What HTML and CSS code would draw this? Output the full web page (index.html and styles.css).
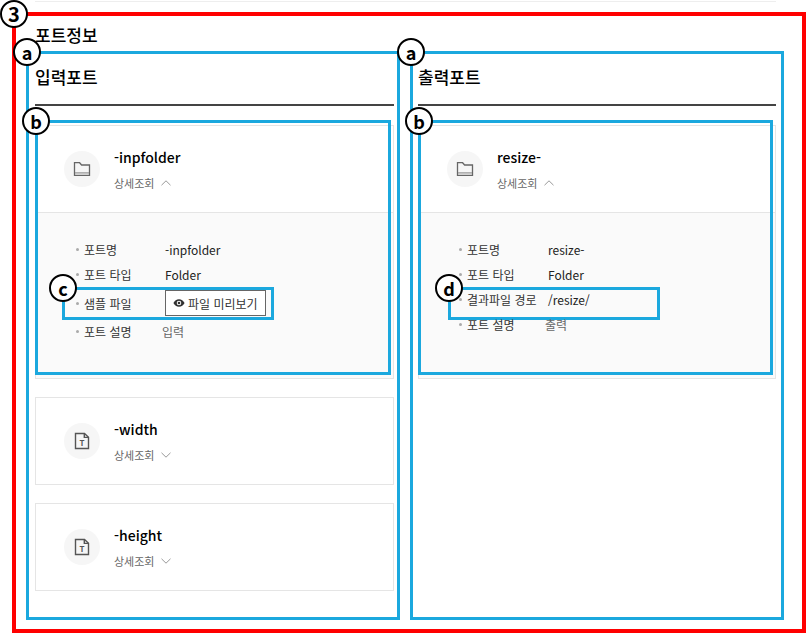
FILE: index.html
```html
<!DOCTYPE html>
<html lang="ko">
<head>
    <meta charset="UTF-8">
    <meta name="viewport" content="width=device-width, initial-scale=1.0">
    <title>포트정보</title>
    <link rel="stylesheet" href="styles.css">
</head>
<body>
    <hr class="section-line">

    <main class="port-info">
        <span class="badge badge-large">3</span>
        <h1>포트정보</h1>

        <div class="columns">
            <!-- Input ports -->
            <section class="column column-input">
                <span class="badge">a</span>
                <h2>입력포트</h2>

                <div class="card-list">
                    <article class="card">
                        <div class="card-header">
                            <span class="card-icon">
                                <svg width="18" height="16" viewBox="0 0 18 16" fill="none" stroke="#666" stroke-width="1.3">
                                    <path d="M1.5 14.3V1.7H6.6L8.6 4H16.5V14.3Z"/>
                                    <path d="M2 11.9H16" stroke="#999"/>
                                </svg>
                            </span>
                            <div class="card-title">
                                <h3>-inpfolder</h3>
                                <button class="toggle" aria-expanded="true">상세조회
                                    <svg width="10" height="6" viewBox="0 0 10 6" fill="none" stroke="#999"><path d="M0.5 5.2L5 0.8L9.5 5.2"/></svg>
                                </button>
                            </div>
                        </div>
                        <dl class="detail">
                            <div class="row"><dt>포트명</dt><dd>-inpfolder</dd></div>
                            <div class="row"><dt>포트 타입</dt><dd>Folder</dd></div>
                            <div class="row row-preview">
                                <dt>샘플 파일</dt>
                                <dd>
                                    <button class="preview">
                                        <svg width="12" height="8" viewBox="0 0 12 8"><path fill="#333" fill-rule="evenodd" d="M0.4 4C1.6 1.6 3.6 0.2 6 0.2S10.4 1.6 11.6 4C10.4 6.4 8.4 7.8 6 7.8S1.6 6.4 0.4 4ZM6 1.7A2.3 2.3 0 1 0 6 6.3A2.3 2.3 0 1 0 6 1.7Z"/><circle cx="6" cy="4" r="1.3" fill="#333"/></svg>
                                        파일 미리보기
                                    </button>
                                    <span class="callout callout-sample"><span class="badge">c</span></span>
                                </dd>
                            </div>
                            <div class="row row-desc"><dt>포트 설명</dt><dd>입력</dd></div>
                        </dl>
                        <div class="callout callout-card"><span class="badge">b</span></div>
                    </article>

                    <article class="card">
                        <div class="card-header">
                            <span class="card-icon">
                                <svg width="16" height="18" viewBox="0 0 16 18" fill="none" stroke="#555" stroke-width="1.4">
                                    <path d="M1.5 1.5H10.5L14.5 5.2V16.5H1.5Z"/>
                                    <path d="M10.3 1.5V5.4H14.5"/>
                                    <text class="icon-letter" x="8" y="13.6">T</text>
                                </svg>
                            </span>
                            <div class="card-title">
                                <h3>-width</h3>
                                <button class="toggle" aria-expanded="false">상세조회
                                    <svg width="10" height="6" viewBox="0 0 10 6" fill="none" stroke="#999"><path d="M0.5 0.8L5 5.2L9.5 0.8"/></svg>
                                </button>
                            </div>
                        </div>
                    </article>

                    <article class="card">
                        <div class="card-header">
                            <span class="card-icon">
                                <svg width="16" height="18" viewBox="0 0 16 18" fill="none" stroke="#555" stroke-width="1.4">
                                    <path d="M1.5 1.5H10.5L14.5 5.2V16.5H1.5Z"/>
                                    <path d="M10.3 1.5V5.4H14.5"/>
                                    <text class="icon-letter" x="8" y="13.6">T</text>
                                </svg>
                            </span>
                            <div class="card-title">
                                <h3>-height</h3>
                                <button class="toggle" aria-expanded="false">상세조회
                                    <svg width="10" height="6" viewBox="0 0 10 6" fill="none" stroke="#999"><path d="M0.5 0.8L5 5.2L9.5 0.8"/></svg>
                                </button>
                            </div>
                        </div>
                    </article>
                </div>
            </section>

            <!-- Output ports -->
            <section class="column column-output">
                <span class="badge">a</span>
                <h2>출력포트</h2>

                <div class="card-list">
                    <article class="card">
                        <div class="card-header">
                            <span class="card-icon">
                                <svg width="18" height="16" viewBox="0 0 18 16" fill="none" stroke="#666" stroke-width="1.3">
                                    <path d="M1.5 14.3V1.7H6.6L8.6 4H16.5V14.3Z"/>
                                    <path d="M2 11.9H16" stroke="#999"/>
                                </svg>
                            </span>
                            <div class="card-title">
                                <h3>resize-</h3>
                                <button class="toggle" aria-expanded="true">상세조회
                                    <svg width="10" height="6" viewBox="0 0 10 6" fill="none" stroke="#999"><path d="M0.5 5.2L5 0.8L9.5 5.2"/></svg>
                                </button>
                            </div>
                        </div>
                        <dl class="detail">
                            <div class="row"><dt>포트명</dt><dd>resize-</dd></div>
                            <div class="row"><dt>포트 타입</dt><dd>Folder</dd></div>
                            <div class="row">
                                <dt>결과파일 경로</dt>
                                <dd>/resize/
                                    <span class="callout callout-result"><span class="badge">d</span></span>
                                </dd>
                            </div>
                            <div class="row row-desc"><dt>포트 설명</dt><dd>출력</dd></div>
                        </dl>
                        <div class="callout callout-card"><span class="badge">b</span></div>
                    </article>
                </div>
            </section>
        </div>
    </main>
</body>
</html>
```

FILE: styles.css
```css
* {
    box-sizing: border-box;
}
body {
    margin: 0;
    font-family: "Noto Sans CJK KR", "Noto Sans", sans-serif;
    font-size: 12px;
    color: #222;
    background: #fff;
}
h1, h2, h3, dl, dd {
    margin: 0;
}
button {
    font-family: inherit;
    cursor: pointer;
}
svg {
    display: block;
}
.section-line {
    height: 1px;
    margin: 1px 30px 10px 35px;
    border: none;
    background: #eee;
}
.port-info {
    position: relative;
    margin-left: 12px;
    padding: 6px 18px 9px 10px;
    border: 4px solid #f00;
}
h1, h2 {
    font-size: 17px;
    line-height: 26px;
    font-weight: 500;
    color: #000;
}
h1 {
    padding-left: 9px;
    margin-bottom: 3px;
}
.columns {
    display: grid;
    grid-template-columns: 1fr 1fr;
    gap: 10px;
}
.column {
    position: relative;
    border: 3px solid #1ba8de;
    padding-top: 10px;
    padding-bottom: 26px;
}
.column-input {
    padding-left: 6px;
    padding-right: 3px;
}
.column-output {
    padding-left: 5px;
    padding-right: 5px;
}
h2 {
    padding-bottom: 14px;
    border-bottom: 2px solid #444;
    box-sizing: content-box;
    margin-bottom: 19px;
}
.card-list {
    display: grid;
    gap: 18px;
}

/* Port card */
.card {
    position: relative;
    border: 1px solid #e5e5e5;
}
.card-header {
    display: flex;
    align-items: center;
    gap: 14px;
    padding: 19px 28px;
}
.card-icon {
    display: flex;
    align-items: center;
    justify-content: center;
    width: 36px;
    height: 36px;
    border-radius: 50%;
    background: #f6f6f6;
}
.icon-letter {
    font-size: 8px;
    font-weight: 700;
    text-anchor: middle;
    fill: #555;
    stroke: none;
}
.card-title {
    display: flex;
    flex-direction: column;
    align-items: flex-start;
    gap: 4px;
}
h3 {
    font-size: 14px;
    line-height: 24px;
    font-weight: 500;
    color: #000;
}
.toggle {
    display: flex;
    align-items: center;
    gap: 7px;
    padding: 0;
    border: none;
    background: none;
    font-size: 11px;
    line-height: 20px;
    color: #666;
}
.detail {
    min-height: 166px;
    padding: 24px 40px;
    border-top: 1px solid #e5e5e5;
    background: #fafafa;
}
.row {
    position: relative;
    display: flex;
    align-items: center;
    height: 25px;
}
.row-preview {
    height: 32px;
}
.row::before {
    content: "";
    width: 3px;
    height: 3px;
    margin-right: 5px;
    border-radius: 50%;
    background: #aaa;
}
dt {
    width: 81px;
    color: #333;
}
.row-desc dt {
    width: 78px;
}
.row-desc dd {
    color: #666;
}
.preview {
    display: flex;
    align-items: center;
    gap: 3px;
    height: 26px;
    padding: 0 7px;
    border: 1px solid #666;
    background: #fff;
    font-size: 12px;
    color: #333;
}

/* Numbered callouts */
.callout {
    position: absolute;
    border: 3px solid #1ba8de;
    pointer-events: none;
}
.callout-card {
    top: -6px;
    right: 2px;
    bottom: 3px;
    left: -1px;
}
.callout-sample, .callout-result {
    top: 0;
    width: 212px;
    height: 33px;
}
.callout-sample {
    left: -14px;
}
.callout-result {
    left: -11px;
}
.badge {
    position: absolute;
    top: -16px;
    left: -16px;
    z-index: 1;
    display: flex;
    align-items: center;
    justify-content: center;
    width: 28px;
    height: 28px;
    border: 2px solid #000;
    border-radius: 50%;
    background: #fff;
    font-size: 18px;
    line-height: 24px;
    font-weight: 700;
    color: #000;
}
.badge-large {
    font-size: 20px;
}
```
